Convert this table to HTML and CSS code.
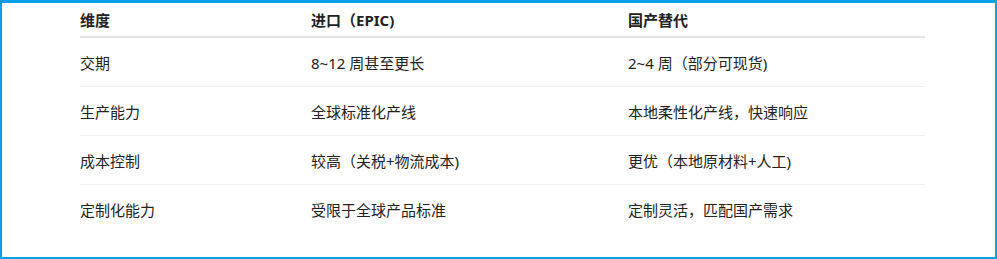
FILE: index.html
```html
<!DOCTYPE html>
<html lang="zh-CN">
<head>
<meta charset="utf-8">
<link rel="stylesheet" href="styles.css">
</head>
<body>
<div class="frame">
  <table class="cmp">
    <thead>
      <tr><th class="c1">维度</th><th class="c2">进口（EPIC)</th><th class="c3">国产替代</th></tr>
    </thead>
    <tbody>
      <tr><td>交期</td><td>8~12 周甚至更长</td><td>2~4 周（部分可现货)</td></tr>
      <tr><td>生产能力</td><td>全球标准化产线</td><td>本地柔性化产线，快速响应</td></tr>
      <tr><td>成本控制</td><td>较高（关税+物流成本)</td><td>更优（本地原材料+人工)</td></tr>
      <tr><td>定制化能力</td><td>受限于全球产品标准</td><td>定制灵活，匹配国产需求</td></tr>
    </tbody>
  </table>
</div>
</body>
</html>
```

FILE: styles.css
```css
html, body {
  margin: 0;
  padding: 0;
  background: #ffffff;
}
.frame {
  box-sizing: border-box;
  width: 997px;
  height: 259px;
  border: 2px solid #0aa0e6;
  border-top-width: 3px;
  padding-left: 78px;
  font-family: "Noto Sans", "Noto Sans CJK SC", sans-serif;
  color: #222222;
}
.cmp {
  border-collapse: collapse;
  width: 845px;
  table-layout: fixed;
  font-size: 15px;
}
.c1 { width: 231px; }
.c2 { width: 317px; }
.c3 { width: 297px; }
.cmp th {
  text-align: left;
  font-weight: 700;
  height: 33px;
  padding: 0;
  border-bottom: 2px solid #e3e3e3;
  vertical-align: middle;
}
.cmp td {
  height: 48px;
  padding: 0;
  border-bottom: 1px solid #f0f0f0;
  vertical-align: middle;
}
.cmp tbody tr:last-child td {
  border-bottom: none;
}
```
